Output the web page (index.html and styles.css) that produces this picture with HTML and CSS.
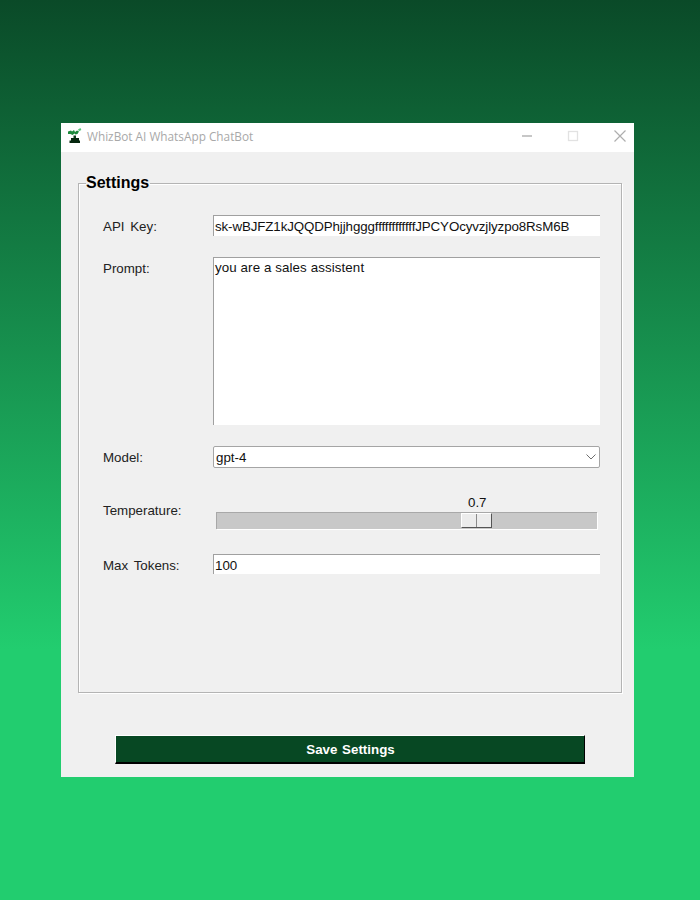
FILE: index.html
```html
<!DOCTYPE html>
<html lang="en">
<head>
<meta charset="utf-8">
<title>WhizBot AI WhatsApp ChatBot</title>
<link rel="stylesheet" href="styles.css">
</head>
<body>
<main class="window">
  <header class="titlebar">
    <svg class="app-icon" viewBox="0 0 16 16" width="16" height="16" aria-hidden="true">
      <path d="M1 3.500l3-1 1 1 2-1.500 1 2 2-1.500 2 1-1.500 2.500-2 .5-1-1-2 1.500-2-1-2.500 0z" fill="#1c8a3c"/>
      <path d="M11 1.500l2.500-1.500 .8 2-2.300 1.200z" fill="#58c67a"/>
      <path d="M6.500 7.500h2.500v3H6.500z" fill="#0d3d1c"/>
      <path d="M4 10h8v2.500H4zM2.500 12.500h10.500v2.500H2.500z" fill="#06280f"/>
    </svg>
    <span class="title">WhizBot AI WhatsApp ChatBot</span>
    <div class="controls">
      <svg width="12" height="12" viewBox="0 0 12 12" aria-hidden="true"><path d="M1 6h10" stroke="#b4b4b4" stroke-width="1.500" fill="none"/></svg>
      <svg width="12" height="12" viewBox="0 0 12 12" aria-hidden="true"><rect x="1.500" y="1.500" width="9" height="9" stroke="#e2e2e2" stroke-width="1.300" fill="none"/></svg>
      <svg width="14" height="14" viewBox="0 0 14 14" aria-hidden="true"><path d="M1.500 1.500l11 11M12.500 1.500l-11 11" stroke="#aeaeae" stroke-width="1.200" fill="none"/></svg>
    </div>
  </header>
  <section class="content">
    <fieldset class="group">
      <legend class="legend">Settings</legend>
      <div class="row row-key">
        <label class="label">API Key:</label>
        <div class="entry entry-key">sk-wBJFZ1kJQQDPhjjhgggffffffffffffJPCYOcyvzjlyzpo8RsM6B</div>
      </div>
      <div class="row row-prompt">
        <label class="label">Prompt:</label>
        <div class="entry textarea">you are a sales assistent</div>
      </div>
      <div class="row row-model">
        <label class="label">Model:</label>
        <div class="combo">
          <span>gpt-4</span>
          <svg width="10" height="6" viewBox="0 0 10 6" aria-hidden="true"><path d="M.5.500L5 5 9.500.500" stroke="#6e6e6e" fill="none"/></svg>
        </div>
      </div>
      <div class="row row-temp">
        <label class="label">Temperature:</label>
        <div class="scale">
          <div class="scale-value">0.7</div>
          <div class="trough"><div class="thumb"></div></div>
        </div>
      </div>
      <div class="row row-tokens">
        <label class="label">Max Tokens:</label>
        <div class="entry entry-tokens">100</div>
      </div>
    </fieldset>
    <div class="actions"><button class="save" type="button">Save Settings</button></div>
  </section>
</main>
</body>
</html>
```

FILE: styles.css
```css
* { box-sizing: border-box; }
html, body { margin: 0; height: 900px; }
body {
  padding: 123px 0 0 61px;
  overflow: hidden;
  background: linear-gradient(180deg, #0a4a28 0, #22cd6f 650px, #22cd6f 900px);
  font-family: "Liberation Sans", Arial, sans-serif;
  font-size: 13.33px;
  color: #111;
}
.window { width: 573px; height: 654px; background: #f0f0f0; display: flex; flex-direction: column; }
.titlebar { flex: none; height: 29px; background: #fff; display: flex; align-items: center; padding: 0 0 3px 6px; }
.app-icon { flex: none; }
.title { margin-left: 4px; font-family: "Open Sans", sans-serif; font-size: 11.8px; color: #a8a8a8; }
.controls { margin-left: auto; width: 114px; padding: 0 7px 0 1px; display: flex; align-items: center; justify-content: space-between; }
.content { flex: 1; padding: 22px 12px 12px 17px; display: flex; flex-direction: column; }
.group { flex: none; height: 519px; margin: 0; padding: 0 21px 0 24px; min-width: 0; border: 1px solid #b4b4b4; box-shadow: inset 1px 1px 0 #fff, 1px 1px 0 #fff; display: block; }
.legend { padding: 0 1px 0 0; margin-left: -17px; font-weight: bold; font-size: 16px; color: #000; line-height: 18px; }
.row { display: flex; }
.label { width: 110px; flex: none; color: #222; word-spacing: 2px; }
.entry { flex: 1; height: 21px; background: #fff; border-top: 1px solid #a0a0a0; border-left: 1px solid #a0a0a0; padding-left: 1px; line-height: 20px; color: #111; white-space: nowrap; overflow: hidden; }
.entry-key { letter-spacing: -.11px; line-height: 21px; }
.row-key { margin-top: 23px; align-items: center; }
.row-key .label { padding-top: 2px; }
.row-prompt { margin-top: 21px; }
.row-prompt .label { padding-top: 4px; }
.textarea { height: 168px; letter-spacing: .1px; }
.row-model { margin-top: 21px; align-items: center; }
.combo { flex: 1; height: 22px; background: #fff; border: 1px solid #a5a5a5; border-radius: 2px; display: flex; align-items: center; justify-content: space-between; padding: 0 3px 0 2px; }
.row-temp { margin-top: 27px; }
.row-temp .label { padding-top: 8px; }
.scale { flex: 1; padding: 0 3px; }
.scale-value { height: 17px; line-height: 16px; padding-left: 252px; }
.trough { height: 17px; background: #c8c8c8; border-top: 1px solid #a8a8a8; border-left: 1px solid #a8a8a8; box-shadow: 1px 1px 0 #fff; position: relative; }
.thumb { position: absolute; left: 244px; top: 0; width: 31px; height: 15px; background: linear-gradient(90deg, #ececec 14px, #8a8a8a 14px, #8a8a8a 15px, #ececec 15px); border: 1px solid; border-color: #fff #555 #555 #fff; }
.row-tokens { margin-top: 25px; align-items: center; }
.row-tokens .label { padding-top: 2px; }
.entry-tokens { height: 20px; line-height: 21px; }
.actions { margin-top: 42px; padding-left: 37px; }
.save { display: block; width: 470px; height: 29px; padding: 0 0 0 1px; background: #074823; color: #fff; font: bold 13.33px "Liberation Sans", Arial, sans-serif; word-spacing: 1px; border: 1px solid; border-color: #fff #000 #000 #fff; border-bottom-width: 2px; }
```
